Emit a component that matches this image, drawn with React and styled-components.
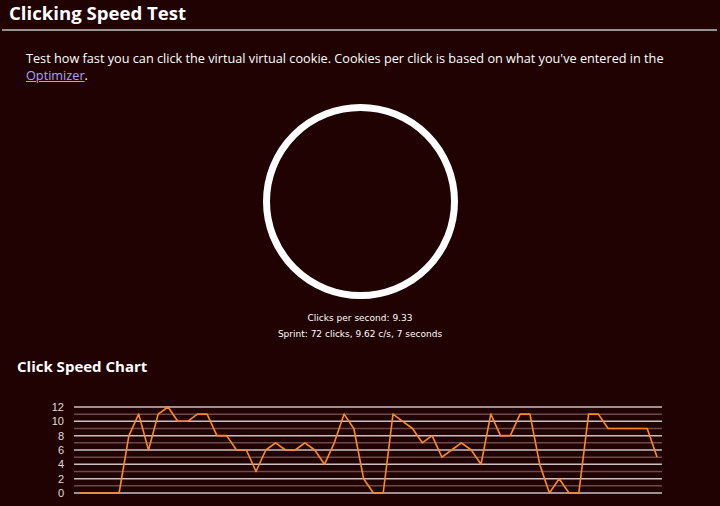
import React from 'react';
import styled, { createGlobalStyle } from 'styled-components';

const GlobalStyle = createGlobalStyle`
  html, body {
    margin: 0;
    padding: 0;
    background: #200203;
  }
  body {
    font-family: "Open Sans", "Noto Sans", sans-serif;
    color: #fff;
    width: 720px;
    height: 506px;
    overflow: hidden;
  }
`;

const Page = styled.div`
  display: flex;
  flex-direction: column;
`;

const Title = styled.h1`
  margin: 0 3px 0 2px;
  padding: 2px 0 0 7px;
  height: 27px;
  font-size: 18.6px;
  font-weight: 700;
  line-height: 22px;
  border-bottom: 2px solid #9a9090;
`;

const Intro = styled.p`
  margin: 19px 0 0 26px;
  font-size: 12.7px;
  line-height: 17px;
  a {
    color: #a7a4ff;
  }
`;

const Clicker = styled.div`
  align-self: center;
  width: 195px;
  height: 195px;
  box-sizing: border-box;
  border: 7px solid #fff;
  border-radius: 50%;
  margin-top: 20px;
  cursor: pointer;
`;

const Stats = styled.div`
  margin-top: 11px;
  display: flex;
  flex-direction: column;
  align-items: center;
  font-family: "DejaVu Sans", Verdana, sans-serif;
  font-size: 9px;
  line-height: 16px;
`;

const SubTitle = styled.h2`
  margin: 14px 0 0 17px;
  font-size: 15px;
  font-weight: 700;
  line-height: 20px;
`;

const ChartBox = styled.div`
  margin-top: 22px;
`;

const data = [
  0, 0, 0, 0, 0, 8, 11, 6, 11, 12, 10, 10, 11, 11, 8, 8, 6, 6, 3, 6,
  7, 6, 6, 7, 6, 4, 7, 11, 9, 2, 0, 0, 11, 10, 9, 7, 8, 5, 6, 7,
  6, 4, 11, 8, 8, 11, 11, 4, 0, 2, 0, 0, 11, 11, 9, 9, 9, 9, 9, 5,
];

const Chart = () => {
  const y = (v) => 95 - v * 7.17;
  const x = (i) => 80 + i * 9.78;
  const pts = data.map((v, i) => `${x(i).toFixed(1)},${y(v).toFixed(1)}`).join(' ');
  const lines = [];
  for (let v = 0; v <= 12; v++) {
    lines.push(
      <line
        key={v}
        x1="74"
        x2="662"
        y1={y(v)}
        y2={y(v)}
        stroke={v % 2 ? '#6b4a4a' : '#c8c0c0'}
        strokeWidth="1.5"
      />
    );
  }
  return (
    <svg width="720" height="110" viewBox="0 0 720 110">
      {lines}
      {[0, 2, 4, 6, 8, 10, 12].map((v) => (
        <text
          key={v}
          x="64"
          y={y(v) + 4}
          textAnchor="end"
          fill="#e0dcdc"
          fontSize="11"
          fontFamily="Liberation Sans, Arial, sans-serif"
        >
          {v}
        </text>
      ))}
      <polyline points={pts} fill="none" stroke="#ff8a1c" strokeWidth="1.6" strokeLinejoin="round" />
    </svg>
  );
};

const App = () => {
  return (
    <Page>
      <GlobalStyle />
      <Title>Clicking Speed Test</Title>
      <Intro>
        Test how fast you can click the virtual virtual cookie. Cookies per click is based on what you've entered in the{' '}
        <a href="#optimizer">Optimizer</a>.
      </Intro>
      <Clicker />
      <Stats>
        <span>Clicks per second: 9.33</span>
        <span>Sprint: 72 clicks, 9.62 c/s, 7 seconds</span>
      </Stats>
      <SubTitle>Click Speed Chart</SubTitle>
      <ChartBox>
        <Chart />
      </ChartBox>
    </Page>
  );
};

export default App;
